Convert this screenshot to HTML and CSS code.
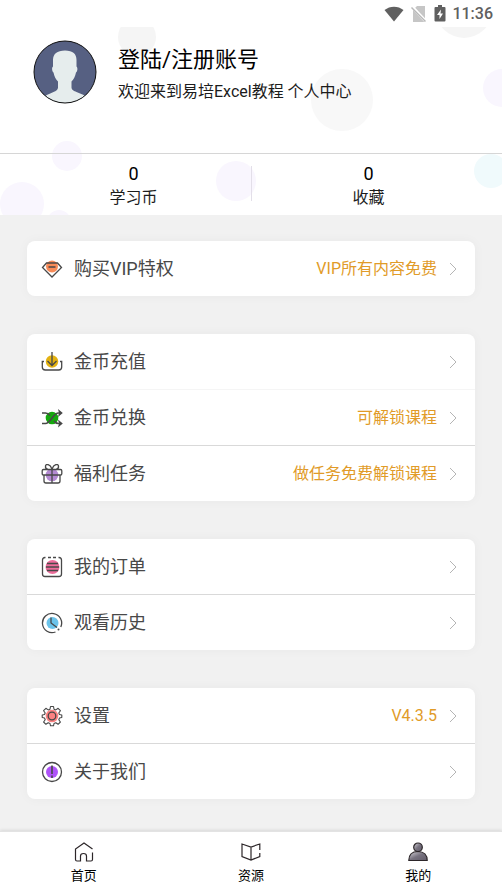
FILE: index.html
```html
<!DOCTYPE html>
<html lang="zh-CN">
<head>
<meta charset="utf-8">
<meta name="viewport" content="width=device-width, initial-scale=1">
<title>个人中心</title>
<link rel="stylesheet" href="styles.css">
</head>
<body>
<div class="status">
  <svg width="20" height="16" viewBox="0 0 20 16" fill="#606060"><path d="M.5 4C6-.5 14-.5 19.500 4L10 15.500z"/></svg>
  <svg width="16" height="18" viewBox="0 0 16 18"><path d="M6 1h8v16H2V5z" fill="#c6c6c6"/><path d="M1 1.500l13.500 14.500" stroke="#fff" stroke-width="3"/><path d="M.5 2.500l14 14" stroke="#b8b8b8" stroke-width="1.500"/></svg>
  <svg width="12" height="17" viewBox="0 0 12 17"><path d="M4 0h4v2h2.500q1 0 1 1v12.500q0 1-1 1h-9q-1 0-1-1V3q0-1 1-1H4z" fill="#606060"/><path d="M7 4.500L3 10h2.500v4L9 8.500H6.500z" fill="#fff"/></svg>
  <span class="clock">11:36</span>
</div>
<header class="hero">
  <svg class="bubbles" viewBox="0 0 502 188" preserveAspectRatio="xMidYMin slice" aria-hidden="true">
    <g fill="#f5f5f5"><circle cx="137" cy="10" r="19"/><circle cx="464" cy="-17" r="28"/></g>
    <circle cx="342" cy="73" r="31" fill="#f8f8f8"/>
    <g fill="#f9f6fe"><circle cx="502" cy="61" r="19"/><circle cx="67" cy="129" r="15"/><circle cx="236" cy="154" r="20"/><circle cx="22" cy="177" r="22"/><circle cx="59" cy="195" r="12"/></g>
    <circle cx="491" cy="144" r="17" fill="#f0fafc"/>
  </svg>
  <a class="profile" href="#login">
    <svg class="avatar" viewBox="0 0 64 64" aria-hidden="true">
      <defs><clipPath id="face"><circle cx="32" cy="32" r="31"/></clipPath></defs>
      <circle cx="32" cy="32" r="31" fill="#566082"/>
      <path clip-path="url(#face)" fill="#e6eded" d="M32 10.500c8 0 11.500 3.500 11.500 9.500v6.500c1.500 1 1 5-.5 6-.8 4-2.300 7-4.500 9v6c0 2.500 2.500 3.500 5 4.500 5 2 9 3.500 11 6V66H10v-8c2-2.500 6-4 10.500-6 2.500-1 4.500-2 4.500-4.500v-6c-2.200-2-3.700-5-4.500-9-1.500-1-2-5-.5-6V20c0-6 4-9.500 12-9.500z"/>
      <circle cx="32" cy="32" r="31" fill="none" stroke="#111"/>
    </svg>
    <span class="who"><span class="name">登陆/注册账号</span><span class="hello">欢迎来到易培Excel教程 个人中心</span></span>
  </a>
  <div class="stats">
    <a class="stat" href="#coins"><span class="num">0</span><span>学习币</span></a>
    <a class="stat" href="#favorites"><span class="num">0</span><span>收藏</span></a>
  </div>
</header>
<main class="menu">
  <section class="card">
    <a class="row" href="#vip">
      <svg class="icon" viewBox="0 0 22 22"><circle class="tint" cx="11" cy="8.500" r="6" fill="#f88b58"/><path d="M5.500 5h11l4 4.500L11 19 1.500 9.500zM7.500 9h7"/></svg>
      <span class="label">购买VIP特权</span><span class="note">VIP所有内容免费</span>
      <svg class="arrow" viewBox="0 0 8 14"><path d="M1 1l6 6-6 6"/></svg>
    </a>
  </section>
  <section class="card">
    <a class="row faint" href="#recharge">
      <svg class="icon" viewBox="0 0 22 22"><circle class="tint" cx="11" cy="10.500" r="6.200" fill="#e3b212"/><path d="M11 1v13M6.500 10l4.500 4.500 4.500-4.500M3 10.500H1.300v5.500q0 3 3 3h13.400q3 0 3-3v-5.500H19"/></svg>
      <span class="label">金币充值</span>
      <svg class="arrow" viewBox="0 0 8 14"><path d="M1 1l6 6-6 6"/></svg>
    </a>
    <a class="row" href="#exchange">
      <svg class="icon" viewBox="0 0 22 22"><circle class="tint" cx="11" cy="11" r="6.300" fill="#15a80e"/><path stroke-width="1.600" d="M1 6h3.500c2 0 3.300 1 4.500 2.500M13 14c1 1.500 2.500 2.500 4.500 2.500h2M1 16.500h3.500C9.500 16.500 12 6 17.500 6h2"/><path fill="#484848" stroke="none" d="M17 2l4.800 4L17 10l1-4zM17 12.500l4.800 4-4.800 4 1-4z"/></svg>
      <span class="label">金币兑换</span><span class="note">可解锁课程</span>
      <svg class="arrow" viewBox="0 0 8 14"><path d="M1 1l6 6-6 6"/></svg>
    </a>
    <a class="row" href="#tasks">
      <svg class="icon" viewBox="0 0 22 22"><circle class="tint" cx="11" cy="12" r="6.300" fill="#b48ad2"/><path d="M2.500 6.500h17q1.300 0 1.300 1.300v3q0 1.200-1.300 1.200h-17q-1.300 0-1.300-1.200v-3q0-1.300 1.300-1.300zM3 12v6q0 2 2 2h12q2 0 2-2v-6M11 6.500V20M3 12h16M11 6C9 1 5 .5 4.500 3c-.3 2 1 3.200 2.500 3.500M11 6c2-5 6-5.500 6.500-3 .3 2-1 3.200-2.500 3.500"/></svg>
      <span class="label">福利任务</span><span class="note">做任务免费解锁课程</span>
      <svg class="arrow" viewBox="0 0 8 14"><path d="M1 1l6 6-6 6"/></svg>
    </a>
  </section>
  <section class="card">
    <a class="row" href="#orders">
      <svg class="icon" viewBox="0 0 22 22"><circle class="tint" cx="11.500" cy="11" r="7" fill="#ed6d9b"/><path d="M4.500 1.500H4Q1.500 1.500 1.500 4v14q0 2.500 2.500 2.500h14q2.500 0 2.500-2.500V4q0-2.500-2.500-2.500h-.5M7 1.500h3M12 1.500h3M6 7.500h11M5 11h13M6 14.500h11"/></svg>
      <span class="label">我的订单</span>
      <svg class="arrow" viewBox="0 0 8 14"><path d="M1 1l6 6-6 6"/></svg>
    </a>
    <a class="row" href="#history">
      <svg class="icon" viewBox="0 0 22 22"><circle class="tint" cx="11.500" cy="11" r="6" fill="#6bc3ea"/><path d="M10 5.500V11l6 4.500M19.800 15A9.600 9.600 0 1 0 14.500 20"/><circle cx="17.500" cy="17.500" r="1" fill="#484848" stroke="none"/></svg>
      <span class="label">观看历史</span>
      <svg class="arrow" viewBox="0 0 8 14"><path d="M1 1l6 6-6 6"/></svg>
    </a>
  </section>
  <section class="card">
    <a class="row" href="#settings">
      <svg class="icon" viewBox="0 0 22 22"><circle class="tint" cx="11" cy="11" r="6.300" fill="#fb8282"/><circle cx="11" cy="11" r="3.800"/><path stroke-width="1.100" stroke-linejoin="round" d="M9.500 1.500h3l.5 2.700 1.800.7 2.300-1.600 2.300 2.400-1.600 2.300.7 1.500 2.300.5v2.500l-2.300.5-.7 1.700 1.600 2.300-2.300 2.300-2.300-1.600-1.800.8-.5 2.300h-3L9 18.500l-1.800-.8-2.300 1.600L2.600 17l1.600-2.300-.7-1.700-2.300-.5V10l2.300-.5.7-1.500-1.600-2.300 2.300-2.400 2.300 1.600L9 4.200z"/></svg>
      <span class="label">设置</span><span class="note">V4.3.5</span>
      <svg class="arrow" viewBox="0 0 8 14"><path d="M1 1l6 6-6 6"/></svg>
    </a>
    <a class="row" href="#about">
      <svg class="icon" viewBox="0 0 22 22"><circle class="tint" cx="11" cy="11" r="6" fill="#ae52f8"/><circle cx="11" cy="11" r="9.500"/><path stroke-width="1.600" d="M11 4.500v8.500M11 14.500v2.500"/></svg>
      <span class="label">关于我们</span>
      <svg class="arrow" viewBox="0 0 8 14"><path d="M1 1l6 6-6 6"/></svg>
    </a>
  </section>
</main>
<nav class="tabs">
  <a class="tab" href="#home"><svg viewBox="0 0 20 20"><path d="M18.500 7L10 1 1.500 7v10.500q0 1.500 1.500 1.500h3.500v-5q0-2.500 3-2.500t3 2.500v5H17q1.500 0 1.500-1.500V10.500"/></svg>首页</a>
  <a class="tab" href="#library"><svg viewBox="0 0 20 20"><path d="M18.800 8V2L10 5 1 2v12.500L10 18l8.800-3.500V11M10 5v13"/></svg>资源</a>
  <a class="tab" href="#me"><svg viewBox="0 0 20 20"><defs><linearGradient id="me" x2="1" y2="1"><stop stop-color="#d8d6dc"/><stop offset=".5" stop-color="#77727f"/><stop offset="1" stop-color="#625c6a"/></linearGradient></defs><path fill="url(#me)" d="M.8 18.500C.8 13 4 9.500 10 9.500s9.200 3.500 9.200 9z"/><circle cx="10" cy="5.300" r="4.300" fill="url(#me)"/></svg>我的</a>
</nav>
</body>
</html>
```
FILE: styles.css
```css
* {
  box-sizing: border-box;
}

body {
  margin: 0;
  min-height: 100vh;
  display: flex;
  flex-direction: column;
  background: #f1f1f1;
  color: #1c1c1c;
  font-family: Roboto, "Noto Sans CJK SC", sans-serif;
  font-size: 16px;
  line-height: 24px;
}

a {
  color: inherit;
  text-decoration: none;
}

svg {
  display: block;
  flex: none;
}

.status {
  display: flex;
  justify-content: flex-end;
  align-items: center;
  height: 27px;
  padding: 0 9px;
  background: #fff;
}

.status svg + svg {
  margin-left: 7px;
}

.clock {
  margin-left: 6px;
  color: #606060;
  font-weight: 500;
}

.hero {
  position: relative;
  overflow: hidden;
  background: #fff;
}

.bubbles {
  position: absolute;
  inset: 0;
  width: 100%;
  height: 100%;
}

.profile {
  position: relative;
  display: flex;
  gap: 21px;
  padding: 13px 33px 45px;
  border-bottom: 1px solid #d6d6d6;
}

.avatar {
  width: 64px;
  height: 64px;
}

.who {
  display: flex;
  flex-direction: column;
  padding-top: 4px;
}

.name {
  color: #000;
  font-size: 22px;
  line-height: 32px;
}

.hello {
  line-height: 32px;
}

.stats {
  position: relative;
  display: flex;
  padding: 8px 16px 5px;
}

.stat {
  flex: 1;
  display: flex;
  flex-direction: column;
  align-items: center;
}

.stats::after {
  content: "";
  position: absolute;
  left: 50%;
  top: 12px;
  bottom: 14px;
  border-left: 1px solid #e3dfe9;
}

.num {
  color: #000;
  font-size: 18px;
}

.menu {
  flex: 1;
  display: flex;
  flex-direction: column;
  gap: 38px;
  padding: 26px 27px 32px;
}

.card {
  border-radius: 8px;
  background: #fff;
  box-shadow: 0 0 12px rgba(0, 0, 0, 0.04);
}

.row {
  display: flex;
  align-items: center;
  min-height: 55px;
  padding: 1px 18px 0 14px;
}

.row:not(:last-child) {
  min-height: 56px;
  border-bottom: 1px solid #d9d9d9;
}

.row.faint {
  border-bottom-color: #f5f5f5;
}

.icon {
  width: 22px;
  height: 22px;
  margin-right: 11px;
  fill: none;
  stroke: #484848;
  stroke-width: 1.3;
}

.tint {
  stroke: none;
}

.label {
  flex: 1;
  color: #484848;
  font-size: 18px;
}

.note {
  color: #e19b28;
}

.arrow {
  width: 8px;
  height: 14px;
  margin-left: 12px;
  fill: none;
  stroke: #b5b5b5;
}

.tabs {
  display: flex;
  background: #fff;
  border-top: 1px solid #e3e3e3;
  box-shadow: 0 -1px 3px rgba(0, 0, 0, 0.1);
}

.tab {
  flex: 1;
  display: flex;
  flex-direction: column;
  align-items: center;
  gap: 4px;
  padding: 10px 0 6px;
  color: #000;
  font-size: 13px;
  line-height: 20px;
}

.tab svg {
  width: 20px;
  height: 20px;
  fill: none;
  stroke: #2c2629;
  stroke-width: 1.2;
}
```
